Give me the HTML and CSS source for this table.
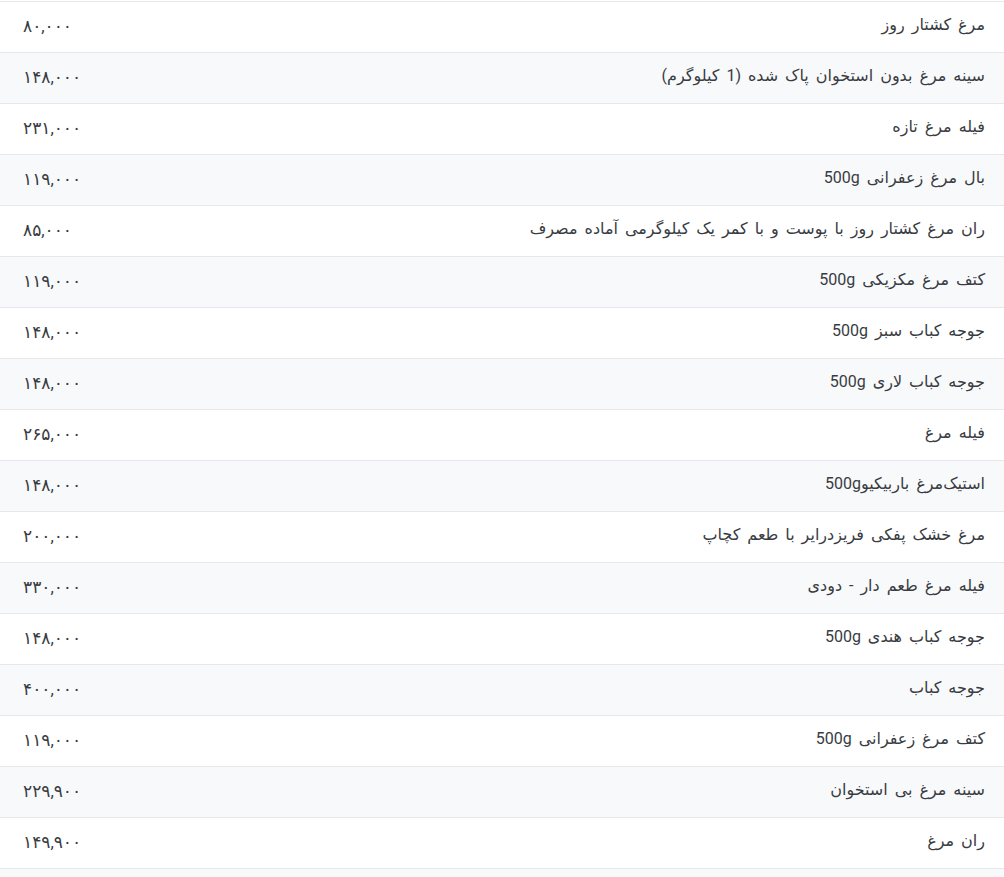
FILE: index.html
```html
<!DOCTYPE html>
<html lang="fa" dir="rtl">
<head>
<meta charset="utf-8">
<link rel="stylesheet" href="styles.css">
</head>
<body>
<table class="prices">
<tbody>
<tr><td class="name">مرغ کشتار روز</td><td class="price">۸۰,۰۰۰</td></tr>
<tr><td class="name">سینه مرغ بدون استخوان پاک شده (1 کیلوگرم)</td><td class="price">۱۴۸,۰۰۰</td></tr>
<tr><td class="name">فیله مرغ تازه</td><td class="price">۲۳۱,۰۰۰</td></tr>
<tr><td class="name">بال مرغ زعفرانی 500g</td><td class="price">۱۱۹,۰۰۰</td></tr>
<tr><td class="name">ران مرغ کشتار روز با پوست و با کمر یک کیلوگرمی آماده مصرف</td><td class="price">۸۵,۰۰۰</td></tr>
<tr><td class="name">کتف مرغ مکزیکی 500g</td><td class="price">۱۱۹,۰۰۰</td></tr>
<tr><td class="name">جوجه کباب سبز 500g</td><td class="price">۱۴۸,۰۰۰</td></tr>
<tr><td class="name">جوجه کباب لاری 500g</td><td class="price">۱۴۸,۰۰۰</td></tr>
<tr><td class="name">فیله مرغ</td><td class="price">۲۶۵,۰۰۰</td></tr>
<tr><td class="name">استیک‌مرغ باربیکیو500g</td><td class="price">۱۴۸,۰۰۰</td></tr>
<tr><td class="name">مرغ خشک پفکی فریزدرایر با طعم کچاپ</td><td class="price">۲۰۰,۰۰۰</td></tr>
<tr><td class="name">فیله مرغ طعم دار - دودی</td><td class="price">۳۳۰,۰۰۰</td></tr>
<tr><td class="name">جوجه کباب هندی 500g</td><td class="price">۱۴۸,۰۰۰</td></tr>
<tr><td class="name">جوجه کباب</td><td class="price">۴۰۰,۰۰۰</td></tr>
<tr><td class="name">کتف مرغ زعفرانی 500g</td><td class="price">۱۱۹,۰۰۰</td></tr>
<tr><td class="name">سینه مرغ بی استخوان</td><td class="price">۲۲۹,۹۰۰</td></tr>
<tr><td class="name">ران مرغ</td><td class="price">۱۴۹,۹۰۰</td></tr>
<tr><td class="name">&nbsp;</td><td class="price">&nbsp;</td></tr>
</tbody>
</table>
</body>
</html>
```
FILE: styles.css
```css
html, body {
  margin: 0;
  padding: 0;
  background: #ffffff;
}
body {
  padding-top: 1px;
  font-family: Roboto, "DejaVu Sans", sans-serif;
  font-size: 16px;
  color: #383c42;
  overflow: hidden;
}
.prices {
  width: 100%;
  border-collapse: collapse;
}
.prices tr {
  height: 51px;
  border-top: 1px solid #e6e8eb;
}
.prices tr:nth-child(even) {
  background: #f8f9fb;
}
.prices td {
  padding: 0 0 5px 0;
  vertical-align: middle;
  white-space: nowrap;
}
.name {
  text-align: right;
  padding-right: 19px !important;
  word-spacing: 3px;
}
.price {
  text-align: left;
  padding-left: 23px !important;
  padding-bottom: 2px !important;
  font-size: 17px;
  width: 150px;
}
```
